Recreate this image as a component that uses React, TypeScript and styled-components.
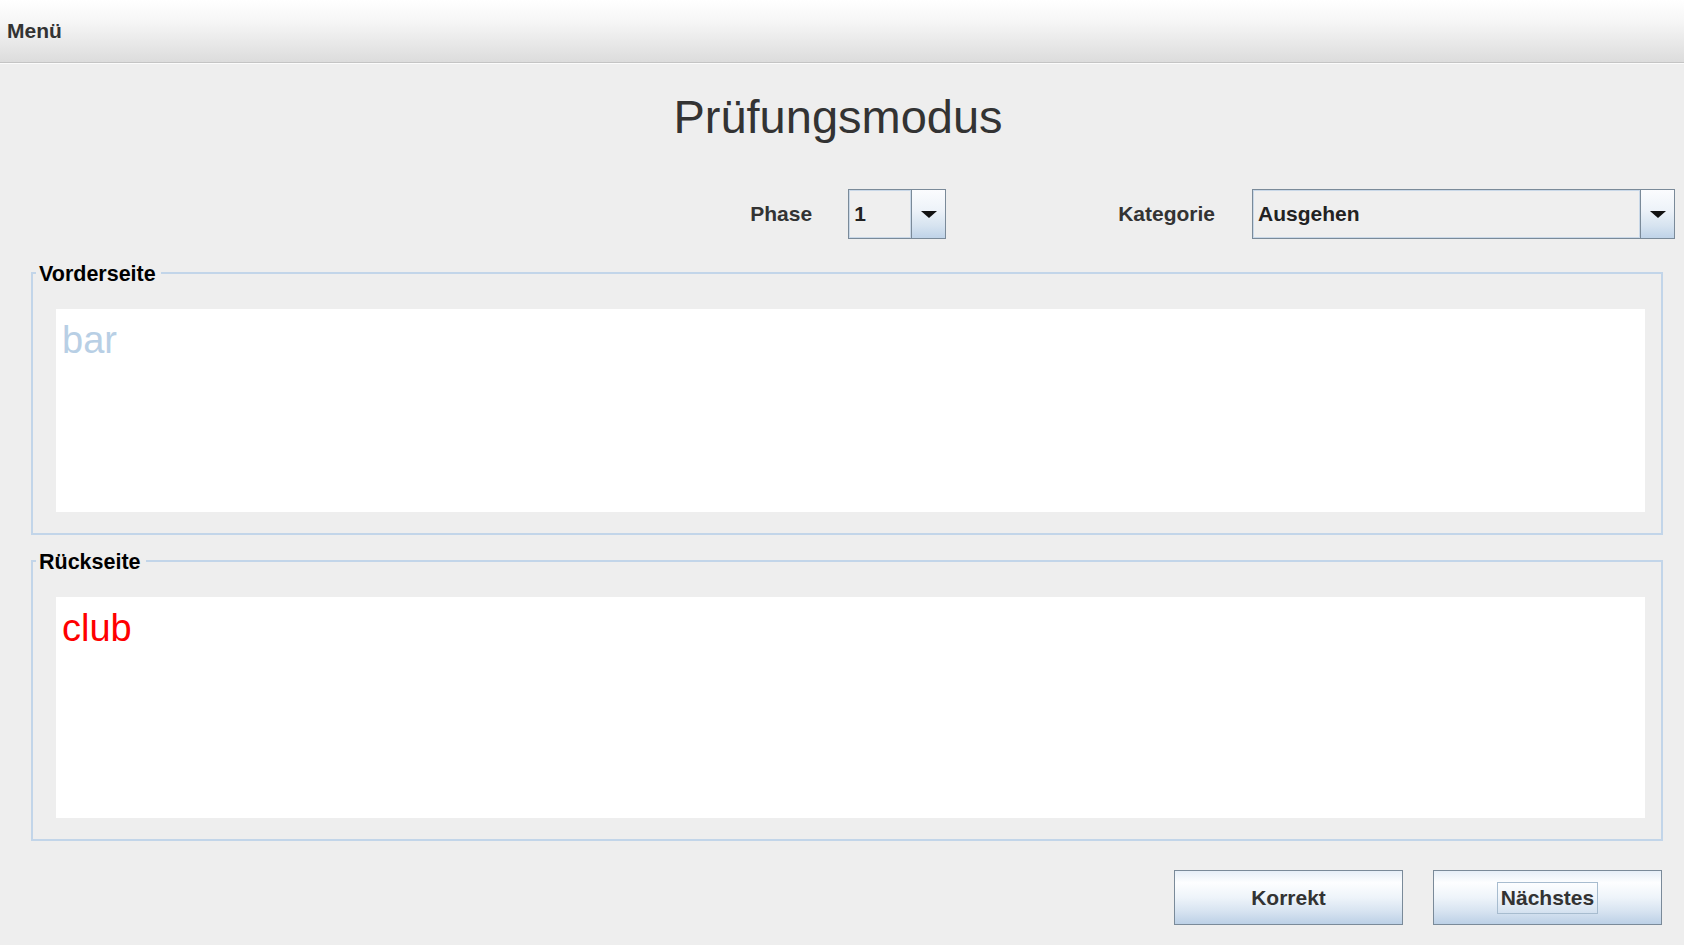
import styled, { createGlobalStyle } from 'styled-components';

const GlobalStyle = createGlobalStyle`
  html, body {
    margin: 0;
    padding: 0;
    background: #eeeeee;
    font-family: "Liberation Sans", Arial, sans-serif;
  }
`;

const Frame = styled.div`
  width: 1684px;
  height: 945px;
  display: flex;
  flex-direction: column;
  background: #eeeeee;
  overflow: hidden;
`;

const MenuBar = styled.div`
  height: 62px;
  display: flex;
  align-items: center;
  padding-left: 7px;
  background: linear-gradient(#ffffff 0%, #f6f6f6 35%, #e4e4e4 80%, #dcdcdc 100%);
  border-bottom: 1px solid #c4c4c4;
  box-shadow: 0 1px 0 #fbfbfb;
`;

const MenuItem = styled.span`
  font-size: 21px;
  font-weight: bold;
  color: #333333;
`;

const Title = styled.h1`
  margin: 27px 0 0;
  padding-right: 8px;
  text-align: center;
  font-size: 47px;
  line-height: 54px;
  font-weight: normal;
  color: #333333;
`;

const FilterRow = styled.div`
  margin-top: 45px;
  display: flex;
  justify-content: flex-end;
  align-items: center;
  padding-right: 9px;
`;

const Label = styled.span<{ $gap: number }>`
  font-size: 21px;
  font-weight: bold;
  color: #333333;
  margin-right: ${p => p.$gap}px;
`;

const Combo = styled.div<{ $width: number; $after?: number }>`
  width: ${p => p.$width}px;
  height: 50px;
  box-sizing: border-box;
  display: flex;
  border: 1px solid #7a8a99;
  margin-right: ${p => p.$after ?? 0}px;
`;

const ComboField = styled.div`
  flex: 1;
  display: flex;
  align-items: center;
  padding-left: 5px;
  background: #efefef;
  box-shadow: inset 0 0 0 1px #c9d8e8;
  font-size: 21px;
  font-weight: bold;
  color: #222222;
`;

const ArrowButton = styled.div`
  width: 33px;
  display: flex;
  align-items: center;
  justify-content: center;
  border-left: 1px solid #7a8a99;
  background: linear-gradient(#fbfcfe 0%, #eef3f9 40%, #d6e3f0 75%, #bfd3e8 100%);

  &::after {
    content: '';
    width: 0;
    height: 0;
    border-left: 8px solid transparent;
    border-right: 8px solid transparent;
    border-top: 7px solid #111111;
  }
`;

const Panels = styled.div`
  margin-top: 33px;
  padding: 0 21px 0 31px;
  display: flex;
  flex-direction: column;
  gap: 25px;
`;

const Panel = styled.section`
  position: relative;
  border: 2px solid #c2d5e9;
  padding: 35px 16px 21px 23px;
`;

const Legend = styled.span`
  position: absolute;
  top: -12px;
  left: 3px;
  padding: 0 5px 0 3px;
  background: #eeeeee;
  font-size: 21.5px;
  line-height: 24px;
  font-weight: bold;
  color: #000000;
`;

const CardText = styled.div<{ $height: number; $color: string }>`
  height: ${p => p.$height}px;
  background: #ffffff;
  padding: 9px 6px 0;
  box-sizing: border-box;
  font-size: 38px;
  line-height: 44px;
  color: ${p => p.$color};
`;

const ButtonRow = styled.div`
  margin-top: 29px;
  display: flex;
  justify-content: flex-end;
  gap: 30px;
  padding-right: 22px;
`;

const Button = styled.button`
  width: 229px;
  height: 55px;
  border: 1px solid #7a8a99;
  background: linear-gradient(#e6eef7 0%, #fdfeff 22%, #eef4fa 50%, #d5e2f0 78%, #bcd0e6 100%);
  font-family: inherit;
  font-size: 21px;
  font-weight: bold;
  color: #333333;
  display: flex;
  align-items: center;
  justify-content: center;
  padding: 0;
`;

const FocusText = styled.span`
  padding: 3px 3px;
  border: 1px solid #a7bccf;
`;

export default function App() {
  return (
    <Frame>
      <GlobalStyle />
      <MenuBar>
        <MenuItem>Menü</MenuItem>
      </MenuBar>
      <Title>Prüfungsmodus</Title>
      <FilterRow>
        <Label $gap={36}>Phase</Label>
        <Combo $width={98} $after={172}>
          <ComboField>1</ComboField>
          <ArrowButton />
        </Combo>
        <Label $gap={37}>Kategorie</Label>
        <Combo $width={423}>
          <ComboField>Ausgehen</ComboField>
          <ArrowButton />
        </Combo>
      </FilterRow>
      <Panels>
        <Panel>
          <Legend>Vorderseite</Legend>
          <CardText $height={203} $color="#b8cfe5">bar</CardText>
        </Panel>
        <Panel>
          <Legend>Rückseite</Legend>
          <CardText $height={221} $color="#ff0000">club</CardText>
        </Panel>
      </Panels>
      <ButtonRow>
        <Button>Korrekt</Button>
        <Button>
          <FocusText>Nächstes</FocusText>
        </Button>
      </ButtonRow>
    </Frame>
  );
}
